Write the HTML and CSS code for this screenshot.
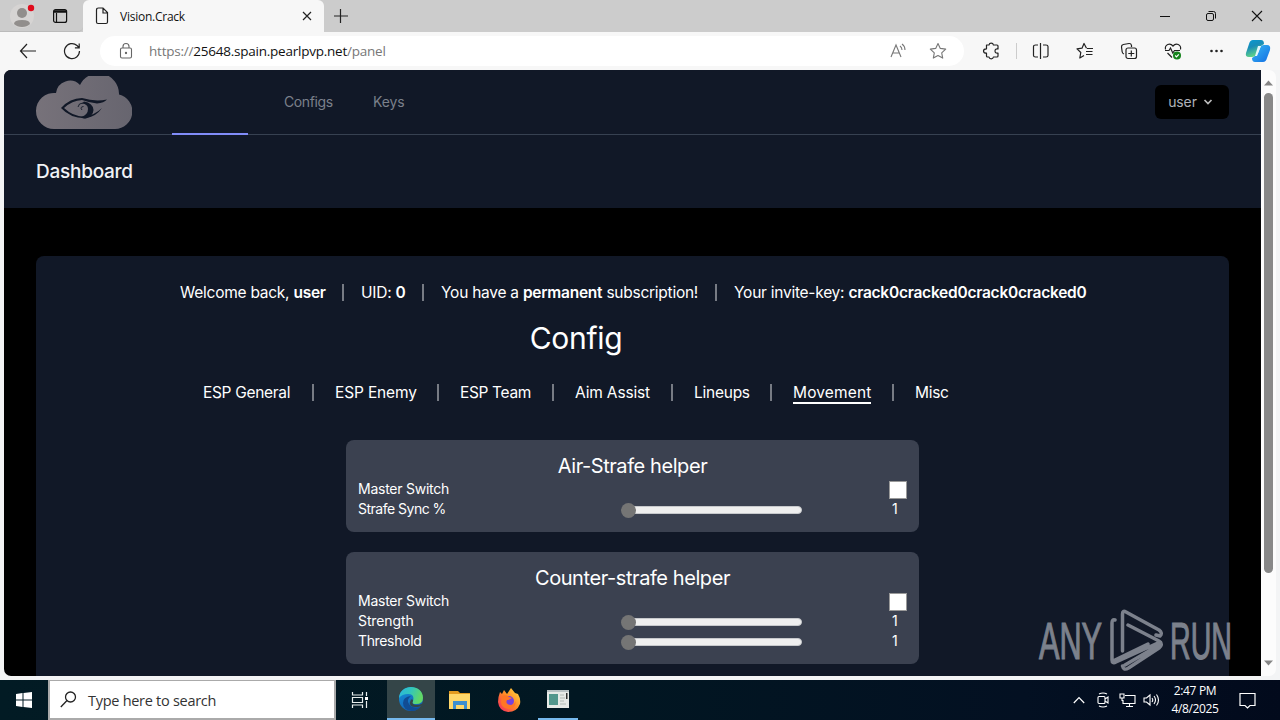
FILE: index.html
```
<!DOCTYPE html>
<html lang="en">
<head>
<meta charset="utf-8">
<title>Vision.Crack</title>
<link rel="stylesheet" href="styles.css">
</head>
<body>
<div class="desktop">
  <div class="tabstrip">
    <div class="strip-left">
      <svg class="profile" width="28" height="28" viewBox="0 0 28 28"><circle cx="13" cy="14" r="12" fill="#d6d4d3"/><circle cx="13" cy="11" r="5" fill="#918e8c"/><path d="M5 22q0-4 8-4t8 4q-3 3-8 3t-8-3z" fill="#918e8c"/><circle cx="22" cy="6" r="3.2" fill="#e00b1c"/></svg>
      <svg class="tabmenu" width="16" height="16" viewBox="0 0 16 16" fill="none" stroke="#111" stroke-width="1.2"><rect x="1.6" y="1.6" width="13" height="12.8" rx="2"/><path d="M2 3.500h12.500" stroke-width="2.500"/><path d="M4.500 5v9"/></svg>
    </div>
    <div class="tab">
      <svg width="14" height="18" viewBox="0 0 14 18" fill="none" stroke="#222" stroke-width="1.2"><path d="M1.500 3q0-2 2-2H8l4.500 4.500V15q0 1.500-1.500 1.500H3q-1.500 0-1.500-1.500zM8 1v5h4.500"/></svg>
      <span class="tab-title">Vision.Crack</span>
      <svg width="10" height="10" viewBox="0 0 10 10" stroke="#222" stroke-width="1.2"><path d="M1 1l8 8M9 1L1 9"/></svg>
    </div>
    <svg class="plus" width="16" height="16" viewBox="0 0 16 16" stroke="#222" stroke-width="1.2"><path d="M7.500 1v14M1 8h14"/></svg>
    <div class="winbtns">
      <svg width="12" height="12" viewBox="0 0 12 12" stroke="#111"><path d="M1 6.500h10"/></svg>
      <svg width="12" height="12" viewBox="0 0 12 12" fill="none" stroke="#111"><rect x="1.500" y="3.500" width="7" height="7" rx="1.500"/><path d="M3.500 1.500H8.500q2 0 2 2V8.500"/></svg>
      <svg width="12" height="12" viewBox="0 0 12 12" stroke="#111" stroke-width="1.100"><path d="M1 1l10 10M11 1L1 11"/></svg>
    </div>
  </div>

  <div class="toolbar">
    <svg class="back" width="18" height="16" viewBox="0 0 18 16" fill="none" stroke="#222" stroke-width="1.200"><path d="M17 8H1.500M8 1L1.500 8L8 15"/></svg>
    <svg class="reload" width="18" height="18" viewBox="0 0 18 18" fill="none" stroke="#222" stroke-width="1.200"><path d="M16.500 9A7.500 7.500 0 1 1 14 3.500L16 5.500M16.200 1.500v4.300h-4.300"/></svg>
    <div class="address">
      <svg width="14" height="18" viewBox="0 0 14 18" fill="none" stroke="#666" stroke-width="1.100"><rect x="1.500" y="6" width="11" height="10" rx="1.500"/><path d="M4 6V4.500a3 3 0 0 1 6 0V6"/><circle cx="7" cy="11" r=".6" fill="#666"/></svg>
      <span class="url">https://<b>25648.spain.pearlpvp.net</b>/panel</span>
      <svg width="18" height="18" viewBox="0 0 18 18" fill="none" stroke="#777" stroke-width="1.100"><path d="M2 15L7 3l5 12M3.800 11h6.400M11 4q2 1.500 2 4M13 2q3 2 3 6"/></svg>
      <svg class="star" width="18" height="18" viewBox="0 0 18 18" fill="none" stroke="#777" stroke-width="1.100" stroke-linejoin="round"><path d="M9 1.500l2.300 4.900 5.400.7-4 3.700 1 5.300L9 13.500l-4.700 2.600 1-5.300-4-3.700 5.400-.7z"/></svg>
    </div>
    <div class="tools">
      <svg width="18" height="18" viewBox="0 0 18 18" fill="none" stroke="#222" stroke-width="1.200" stroke-linejoin="round"><path d="M4.500 3H7q.3-1.800 2.200-1.800T11.400 3H15q1 0 1 1v3q-3-.5-3 2t3 2v3q0 1-1 1h-3.600q-.3 1.800-2.200 1.800T7 15H5.500q-1 0-1-1v-2.800q-3 0-3-2.200t3-2.200z"/></svg>
      <i class="divider"></i>
      <svg width="18" height="18" viewBox="0 0 18 18" fill="none" stroke="#222" stroke-width="1.200"><path d="M8.500 1v16M6 3H3.500Q1.500 3 1.500 4.500v9q0 1.500 2 1.500H6M11 3h3q2 0 2 1.500v9q0 1.500-2 1.500h-3"/></svg>
      <svg width="18" height="18" viewBox="0 0 18 18" fill="none" stroke="#222" stroke-width="1.200" stroke-linejoin="round"><path d="M10.500 6.200L8 1.500 6 6.200l-5 .7 3.800 3.600-1 5.500L8 13.500M11 6.500h6M10 9.500h6.500M10 12.500h6.500"/></svg>
      <svg width="18" height="18" viewBox="0 0 18 18" fill="none" stroke="#222" stroke-width="1.200"><rect x="6" y="6" width="10.500" height="10.500" rx="2"/><path d="M11.300 8.500v6M8.300 11.500h6M4 12Q2.500 11.500 2.200 10L1.500 5q-.2-2 1.800-2.500L9 1.500q2-.2 2.500 1.800V5"/></svg>
      <svg width="18" height="18" viewBox="0 0 18 18" fill="none" stroke="#222" stroke-width="1.200"><path d="M1.500 7.500C.5 2.500 6 .5 9 4c3-3.500 8.500-1.500 7.500 3.500M1 8.500h4L6.500 6l2.300 5L10.500 8.500H16M3.500 11L8 15.500"/><circle cx="13" cy="13.500" r="4" fill="#15831c" stroke="none"/><path d="M11.200 13.500l1.300 1.300 2.300-2.500" stroke="#fff"/></svg>
      <svg width="18" height="18" viewBox="0 0 18 18" fill="#222"><circle cx="3.500" cy="9" r="1.300"/><circle cx="8.500" cy="9" r="1.300"/><circle cx="13.500" cy="9" r="1.300"/></svg>
      <svg class="copilot" width="26" height="26" viewBox="0 0 26 26"><defs><linearGradient id="ca" x2="0.400" y2="1"><stop stop-color="#079bd4"/><stop offset=".45" stop-color="#198cb8"/><stop offset="1" stop-color="#65d884"/></linearGradient><linearGradient id="cb" y2="1"><stop stop-color="#38baf4"/><stop offset="1" stop-color="#136de3"/></linearGradient></defs><path d="M8 2h8q3 0 3 4l-3 2q-2 0-3 3l-2 6q-1 2-4 2H4q-4 0-3-4L4 6q1-4 4-4z" fill="url(#ca)"/><path d="M18 24h-8q-3 0-3-4l3-2q2 0 3-3l2-5q1-3 4-3h3q4 0 3 5l-3 8q-1 4-4 4z" fill="url(#cb)"/><path d="M13 8h3l-4 10H10z" fill="#e4f7fb"/></svg>
    </div>
  </div>

  <div class="viewport">
    <main class="page">
      <nav class="nav">
        <svg class="logo" width="96" height="53" viewBox="0 0 96 53"><defs><linearGradient id="cl"><stop stop-color="#77727a"/><stop offset="1" stop-color="#67656f"/></linearGradient></defs><path d="M18 53A18 18 0 0 1 0 35A18 18 0 0 1 20 17A14 14 0 0 1 44 9A20.500 20.500 0 0 1 83 18.500A17.500 17.500 0 0 1 79 53z" fill="url(#cl)"/><g fill="#111827"><path d="M25 32Q34 22 46 22Q59 26 71 23.500Q68 27 61 27.500Q52 26 46 24Q36 24.500 28 32Q37 40.500 48 40.700Q59 39 66 32Q60 41 49 42.300Q34 42 25 32z"/><path d="M48 25.500Q57 27 57.500 34Q57 40 50 42.500Q46 42.500 45 41Q52 39 52 33Q52 28 46 27.500z"/></g><path d="M42 31Q42.500 27 47 27M46 34Q43.500 31 47.500 30.500" fill="none" stroke="#111827" stroke-width=".9"/></svg>
        <span class="nav-active"></span>
        <a class="nav-configs">Configs</a>
        <a class="nav-keys">Keys</a>
        <button class="user"><span>user</span><svg width="10" height="8" viewBox="0 0 10 8" fill="none" stroke="#bbb" stroke-width="1.700"><path d="M1.500 2L5 5.500 8.500 2"/></svg></button>
      </nav>
      <header class="heading">Dashboard</header>
      <section class="panel">
        <div class="row welcome">
          <span class="w1">Welcome back, <b>user</b></span><span class="w2">UID: <b>0</b></span><span class="w3">You have a <b>permanent</b> subscription!</span><span class="w4">Your invite-key: <b>crack0cracked0crack0cracked0</b></span>
        </div>
        <h1 class="config">Config</h1>
        <div class="row tabs">
          <a class="t1">ESP General</a><a class="t2">ESP Enemy</a><a class="t3">ESP Team</a><a class="t4">Aim Assist</a><a class="t5">Lineups</a><a class="t6"><u>Movement</u></a><a class="t7">Misc</a>
        </div>
        <div class="box">
          <h2 class="air">Air-Strafe helper</h2>
          <div class="setting"><span class="ms">Master Switch</span><i></i><em class="check"></em></div>
          <div class="setting"><span class="ss">Strafe Sync %</span><i class="slider"></i><em>1</em></div>
        </div>
        <div class="box">
          <h2 class="counter">Counter-strafe helper</h2>
          <div class="setting"><span class="ms">Master Switch</span><i></i><em class="check"></em></div>
          <div class="setting"><span class="st">Strength</span><i class="slider"></i><em>1</em></div>
          <div class="setting"><span class="th">Threshold</span><i class="slider"></i><em>1</em></div>
        </div>
      </section>
    </main>
    <div class="scrollbar">
      <svg width="9" height="6" viewBox="0 0 9 6"><path d="M0 5.500l4.500-5L9 5.500z" fill="#858585"/></svg>
      <div class="thumb"></div>
      <svg width="9" height="6" viewBox="0 0 9 6"><path d="M0 .5l4.500 5L9 .5z" fill="#858585"/></svg>
    </div>
  </div>

  <div class="taskbar">
    <div class="start"><svg width="16" height="16" viewBox="0 0 16 16" fill="#fff"><path d="M0 2l6.500-1v6.500H0zM7.500 1L16 0v7.500H7.500zM0 8.500h6.500V15L0 14zM7.500 8.500H16V16l-8.500-1z"/></svg></div>
    <div class="search"><svg width="17" height="17" viewBox="0 0 17 17" fill="none" stroke="#222" stroke-width="1.300"><circle cx="10.500" cy="6" r="5"/><path d="M7 9.500L.8 16"/></svg><span>Type here to search</span></div>
    <div class="app"><svg width="18" height="18" viewBox="0 0 18 18" fill="none" stroke="#e8eeee" stroke-width="1.200"><path d="M1.500 1v3h10V1M1.500 17v-3h10v3M1.500 6.500h10v5h-10zM15.500 1v4M15.500 10v7"/><path d="M14 6h3v3h-3z" fill="#fff" stroke="none"/></svg></div>
    <div class="app edge"><svg width="26" height="26" viewBox="0 0 26 26"><defs><linearGradient id="ea" x2="1" y2=".3"><stop stop-color="#2bb5df"/><stop offset=".5" stop-color="#32c6bd"/><stop offset="1" stop-color="#62d865"/></linearGradient><linearGradient id="eb" x2=".5" y2="1"><stop stop-color="#1695db"/><stop offset="1" stop-color="#1260b4"/></linearGradient></defs><circle cx="13" cy="13" r="12" fill="url(#eb)"/><path d="M1 12C2-3 25-2 25 12q0 6-7 6-5 0-3-3 2-7-5-7-6 0-9 4z" fill="url(#ea)"/><path d="M13 10q-5 4-2 8 3 5 11 3-3 4-8 4-9-1-9-8 0-6 8-7z" fill="#114c93"/><path d="M15 15q-2 3 3 4 4 0 6-1.500l.5 1-2.500 2q-7 1.500-9.500-1-1.500-3 .5-6 3-.5 2 1.500z" fill="#344548"/></svg></div>
    <div class="app"><svg width="24" height="22" viewBox="0 0 24 22"><path d="M1 2h9l2 2h10v16H1z" fill="#e39b20"/><path d="M1 5h21v15H1z" fill="#ffd76a"/><path d="M5 12h14v8h-3v-4H8v4H5z" fill="#3d8fd0"/></svg></div>
    <div class="app"><svg width="26" height="26" viewBox="0 0 26 26"><defs><linearGradient id="ff" x1="1" x2="0" y2="1"><stop stop-color="#ffe043"/><stop offset=".5" stop-color="#ff8726"/><stop offset="1" stop-color="#f52267"/></linearGradient></defs><path d="M4 5l2 2 2-4 3 4 4-6 4 5 3 1q3 5 2 10-3 8-12 8Q3 24 2 15 2 10 4 5z" fill="url(#ff)"/><circle cx="13" cy="14" r="5" fill="#7642dd"/><path d="M6 9q5-2 7 1l3 1q-3 2-5 2-2 4 3 5 4 0 6-4-1 8-7 8-8-1-8-7z" fill="#ff7625"/></svg></div>
    <div class="app running"><svg width="22" height="20" viewBox="0 0 22 20"><path d="M0 1h22v18H0z" fill="#e7eae7"/><path d="M0 1h22v2H0z" fill="#b9c2c4"/><path d="M2 5h9v11H2z" fill="#53978d"/><path d="M13 6h4M13 9h5M13 12h4M13 15h6" stroke="#b2bab5"/><path d="M19 4h1.500v6H19z" fill="#333"/></svg></div>
    <div class="tray">
      <svg width="12" height="8" viewBox="0 0 12 8" fill="none" stroke="#fff" stroke-width="1.200"><path d="M.8 7L6 1.500 11.200 7"/></svg>
      <svg class="meet" width="12" height="16" viewBox="0 0 12 16" fill="none" stroke="#fff" stroke-width="1.100"><rect x="1" y="4.500" width="7" height="7" rx="1"/><path d="M8 7l3-2v6L8 9M2 2q4-2 8 0M2 14q4 2 8 0"/></svg>
      <svg class="net" width="17" height="15" viewBox="0 0 17 15" fill="none" stroke="#fff" stroke-width="1.100"><path d="M6 2.500h10v8H4V7M7 13.500h7M10.500 11v2M1 1h4v4H1zM3 5v3"/></svg>
      <svg class="sound" width="17" height="14" viewBox="0 0 17 14" fill="none" stroke="#fff" stroke-width="1.100"><path d="M1 5h2.500L7 2v10L3.500 9H1zM9 5q1.500 2 0 4M11 3q3 4 0 8M13.500 1.500q4 5.500 0 11"/></svg>
      <div class="clock"><span>2:47 PM</span><span>4/8/2025</span></div>
      <svg class="notice" width="17" height="17" viewBox="0 0 17 17" fill="none" stroke="#fff" stroke-width="1.200"><path d="M1 1.500h15v12h-5L8.500 16 6 13.500H1z"/></svg>
    </div>
  </div>

  <div class="watermark">
    <span class="any">ANY</span>
    <svg width="56" height="64" viewBox="0 0 56 64" fill="none" stroke="currentColor" stroke-width="3.500" stroke-linejoin="round" stroke-linecap="round"><path d="M5 11Q2 10 2 14V51q0 4 4 2L49 33.500M12.500 42V5q0-4 3.500-2L49 21q4 3 1 6L46 26M18 16L49 32q4 2 0 4L15 56 M12.500 57q1 5 6 2L49 39q4-3 1-6M5 51L38 35"/></svg>
    <span class="run">RUN</span>
  </div>
</div>
</body>
</html>
```
FILE: styles.css
```
* { box-sizing: border-box; }
body { margin: 0; overflow: hidden; font-family: Inter, "Open Sans", sans-serif; }
svg { display: block; flex: none; }
b { font-weight: 600; }
.desktop { position: relative; width: 1280px; height: 720px; display: flex; flex-direction: column; background: #f3f4f5; overflow: hidden; }

.tabstrip { height: 32px; flex: none; display: flex; align-items: center; background: #ccc; }
.strip-left { width: 83px; height: 32px; display: flex; align-items: center; padding-left: 9px; gap: 15px; border-bottom: 1px solid #bbb; border-radius: 0 0 5px 0; }
.tab { width: 241px; height: 32px; display: flex; align-items: center; padding: 0 12px 0 12px; background: #f7f7f7; border-radius: 6px 6px 0 0; }
.tab-title { flex: 1; margin-left: 11px; font: 12px "Open Sans", sans-serif; letter-spacing: -.25px; color: #111; }
.plus { margin-left: 9px; }
.winbtns { display: flex; gap: 34px; margin-left: auto; padding-right: 17px; }

.toolbar { height: 38px; flex: none; display: flex; align-items: center; background: #f7f7f7; padding-left: 19px; }
.reload { margin-left: 26px; }
.address { width: 864px; height: 30px; margin-left: 19px; padding: 0 17px 0 19px; border-radius: 15px; background: #fff; display: flex; align-items: center; }
.url { flex: 1; margin-left: 16px; font: 13.5px "Open Sans", sans-serif; letter-spacing: -.23px; color: #777; }
.url b { font-weight: 400; color: #111; }
.star { margin-left: 22px; }
.tools { display: flex; align-items: center; margin-left: 18px; gap: 26px; }
.divider { width: 1px; height: 16px; background: #ccc; margin: 0 -11px 0 -10px; }
.copilot { margin-left: -7px; }

.viewport { width: 1272px; height: 606px; margin-left: 4px; flex: none; display: flex; border-radius: 7px; overflow: hidden; background: #fcfcfc; }
.page { width: 1257px; height: 606px; background: #000; color: #fff; overflow: hidden; }
.nav { height: 65px; display: flex; align-items: center; background: #111827; border-bottom: 1px solid #374151; padding: 0 32px; font-size: 14px; color: #7b808b; }
.nav-active { width: 76px; height: 2px; align-self: flex-end; margin: 0 36px -1px 40px; background: #818cf8; }
.nav-configs { width: 89px; letter-spacing: -.4px; }
.nav-configs, .nav-keys { padding-bottom: 1px; }
.nav-keys { letter-spacing: -.1px; }
.user { margin-left: auto; width: 74px; height: 34px; border: 0; border-radius: 6px; background: #000; color: #aeb2b9; font: 14px Inter, sans-serif; letter-spacing: -.1px; display: flex; align-items: center; justify-content: center; gap: 6px; padding: 0 9px 2px 6px; }
.user svg { margin-top: 2px; }
.heading { height: 73px; background: #111827; padding: 0 32px; line-height: 73px; font-size: 19px; font-weight: 500; letter-spacing: -.25px; color: #f1f3f6; }
.panel { width: 1193px; height: 440px; margin: 48px 0 0 32px; padding-top: 28px; border-radius: 8px; background: #111827; }
.row { display: flex; height: 17px; line-height: 17px; font-size: 15.5px; white-space: nowrap; letter-spacing: -.25px; }
.row > * + * { padding-left: 17px; }
.row > *:not(:last-child) { border-right: 2px solid #777b84; }
.welcome { padding-left: 144px; }
.w1 { width: 164px; }
.w2 { width: 80px; }
.w3 { width: 293px; }
.config { width: 182px; height: 40px; margin: 17px 0 26px 449px; line-height: 40px; text-align: center; font-weight: 400; font-size: 30px; letter-spacing: -.3px; }
.tabs { padding-left: 167px; }
.tabs > * + * { padding-left: 21px; }
.t1 { width: 111px; letter-spacing: -.32px; }
.t2 { width: 125px; letter-spacing: -.15px; }
.t3 { width: 115px; letter-spacing: -.35px; }
.t4 { width: 119px; letter-spacing: -.15px; }
.t5 { width: 99px; }
.t6 { width: 122px; letter-spacing: .15px; }
.t7 { letter-spacing: -.3px; }
.t6 u { display: inline-block; height: 20px; text-decoration: none; border-bottom: 2px solid #fff; }
.box { width: 573px; margin: 0 0 20px 310px; padding: 10px 12px 12px; border-radius: 8px; background: #3b4150; }
.tabs + .box { margin-top: 39px; }
.box h2 { margin: 0; height: 30px; line-height: 33px; text-align: center; font-size: 20px; font-weight: 400; letter-spacing: -.42px; }
.setting { height: 20px; line-height: 18px; display: grid; grid-template-columns: 263px 1fr 19px; font-size: 14px; letter-spacing: -.25px; }
.ss { letter-spacing: -.5px; }
.st { letter-spacing: -.1px; }
.th { letter-spacing: -.35px; }
.setting em { font-style: normal; padding-left: 4px; }
.setting .check { width: 18px; height: 18px; margin: 1px 0 0 1px; background: #fff; border: 1px solid #999; }
.slider { width: 175px; height: 8px; margin: 6px 0 0 6px; border-radius: 4px; border: 1px solid #c7c9cc; background: #efefef; display: flex; align-items: center; }
.slider::before { content: ""; width: 15px; height: 15px; flex: none; margin-left: -7px; border-radius: 50%; background: #757575; }
.scrollbar { width: 15px; height: 606px; display: flex; flex-direction: column; align-items: center; padding: 10px 0; justify-content: space-between; }
.thumb { width: 9px; height: 480px; margin: 7px 0 auto; border-radius: 5px; background: #888; }

.taskbar { height: 40px; margin-top: 4px; flex: none; display: flex; background: linear-gradient(90deg, #021b24, #011722 45%, #031022 80%, #020a1c); color: #fff; }
.start { width: 48px; display: grid; place-items: center; }
.search { width: 288px; display: flex; align-items: center; gap: 11px; padding-left: 10px; background: #fff; border: 2px solid #aaa; border-top-width: 1px; font: 14.5px "Open Sans", sans-serif; color: #333; letter-spacing: -.28px; }
.search span { padding-top: 1px; }
.app { width: 48px; height: 40px; display: grid; place-items: center; }
.app + .app { margin-left: 1px; }
.app.edge { margin-left: 3px; background: #344548; border-bottom: 2px solid #76b9ed; }
.app.running { width: 40px; margin-left: 5px; border-bottom: 2px solid #76b9ed; }
.tray { margin-left: auto; display: flex; align-items: center; padding-right: 24px; }
.meet { margin-left: 12px; }
.net { margin-left: 10px; }
.sound { margin-left: 7px; }
.clock { width: 60px; margin: 0 14px 0 5px; text-align: center; display: flex; flex-direction: column; font: 12px/18px "Open Sans", sans-serif; letter-spacing: -.35px; }

.watermark { position: absolute; left: 1039px; top: 609px; width: 193px; display: flex; align-items: center; color: #7c818c; }
.watermark span { font: 52px/64px "Liberation Sans", sans-serif; -webkit-text-stroke: 1.2px currentColor; transform: scaleX(.59); transform-origin: left; }
.any { width: 71px; }
.run { width: 62px; margin-left: 4px; }
.watermark .run { transform: scaleX(.55); }
```
